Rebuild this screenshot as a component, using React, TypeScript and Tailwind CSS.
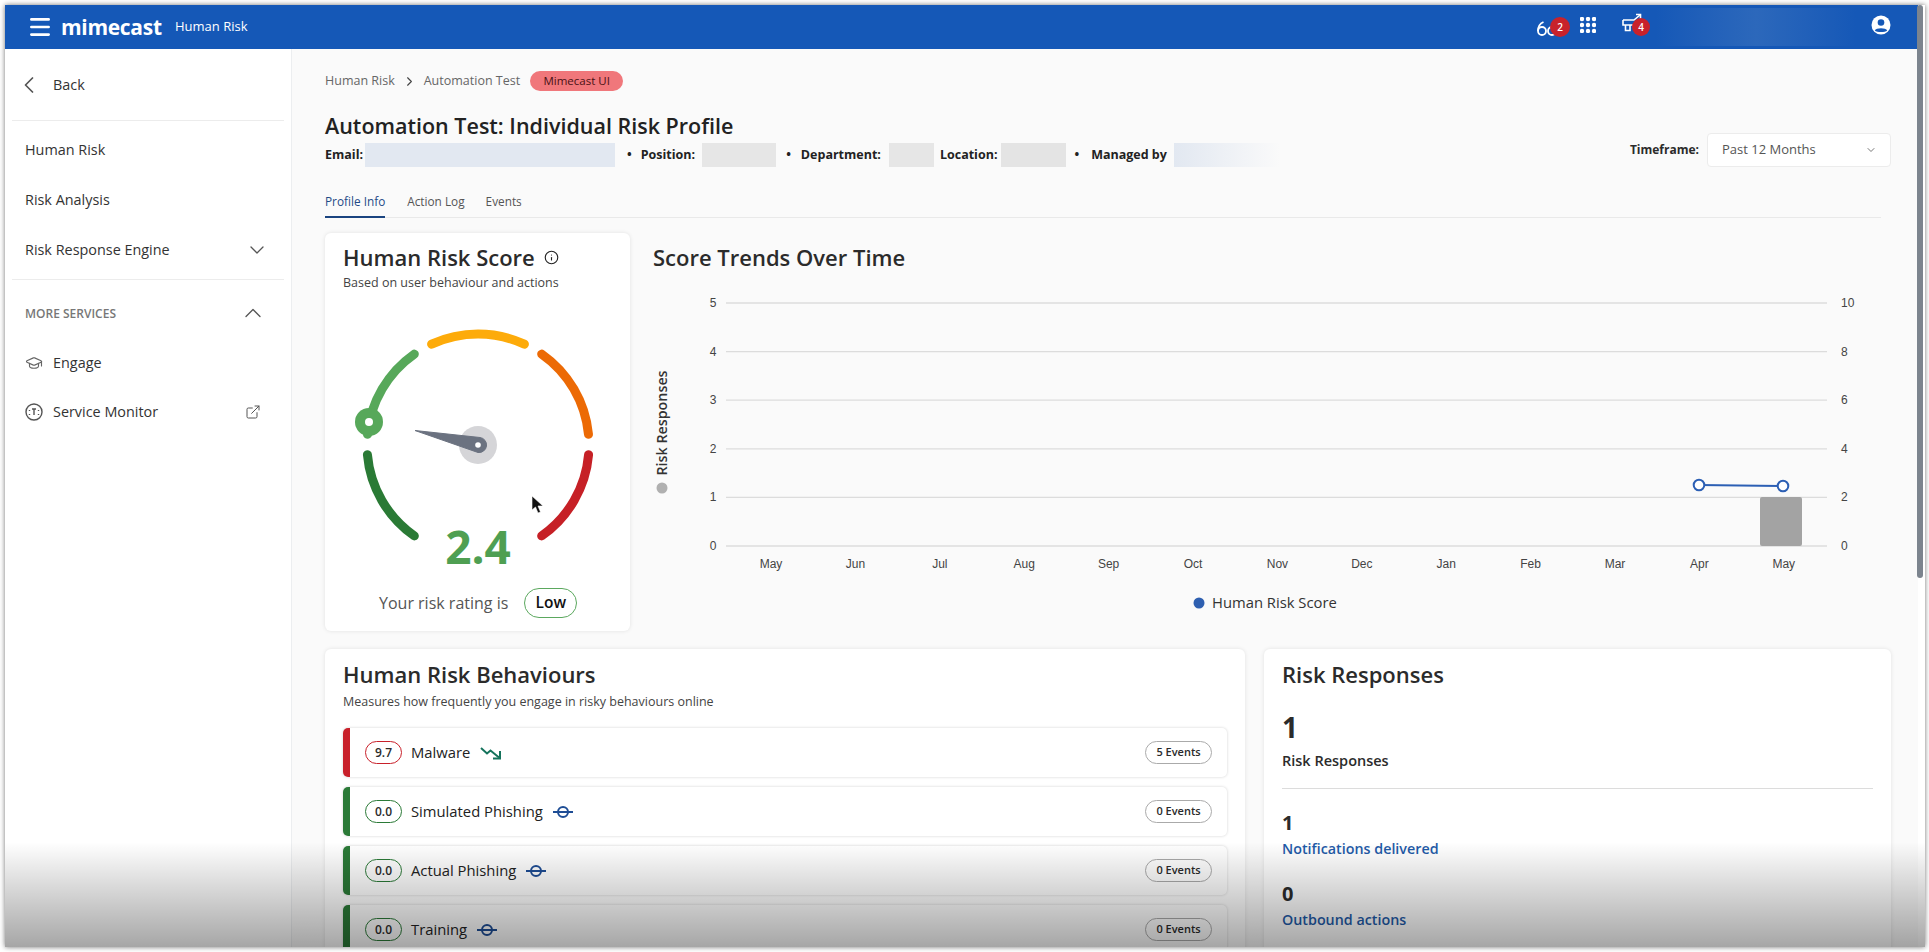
import {
  ChevronDown,
  ChevronLeft,
  ChevronRight,
  ChevronUp,
  ExternalLink,
  GraduationCap,
  Info,
  Menu,
} from "lucide-react";

const months = ["May", "Jun", "Jul", "Aug", "Sep", "Oct", "Nov", "Dec", "Jan", "Feb", "Mar", "Apr", "May"];

const behaviours = [
  { score: "9.7", name: "Malware", events: "5 Events", bad: true },
  { score: "0.0", name: "Simulated Phishing", events: "0 Events", bad: false },
  { score: "0.0", name: "Actual Phishing", events: "0 Events", bad: false },
  { score: "0.0", name: "Training", events: "0 Events", bad: false },
];

const arc = (from: number, to: number, r = 111) => {
  const p = (a: number) => {
    const rad = (a * Math.PI) / 180;
    return `${153 + r * Math.sin(rad)} ${126 - r * Math.cos(rad)}`;
  };
  return `M${p(from)} A${r} ${r} 0 0 1 ${p(to)}`;
};

const Gauge = () => (
  <svg width="305" height="262" viewBox="0 0 305 262" className="mt-[28px] block">
    <g fill="none" strokeWidth="9" strokeLinecap="round">
      <path d={arc(-145, -95)} stroke="#2a7a35" />
      <path d={arc(-84.5, -35)} stroke="#57a85a" />
      <path d={arc(-24.7, 24.7)} stroke="#fdab0a" />
      <path d={arc(35, 84.5)} stroke="#ec6a05" />
      <path d={arc(95, 145)} stroke="#c62026" />
    </g>
    <circle cx="44" cy="103" r="14" fill="#57a85a" />
    <circle cx="44" cy="103" r="4" fill="#fff" />
    <circle cx="153" cy="126" r="19" fill="#d5d5d8" />
    <path d="M90 111.500 L155 118.500 A7.500 7.500 0 0 1 153 133.500 Z" fill="#6b7280" strokeLinejoin="round" stroke="#6b7280" />
    <circle cx="153" cy="126" r="2.800" fill="#fff" />
    <text x="153" y="245" textAnchor="middle" fontSize="46" fontWeight="700" fill="#4f9f52" fontFamily="'Open Sans', sans-serif">
      2.4
    </text>
  </svg>
);

const Chart = () => {
  const x0 = 73;
  const x1 = 1174;
  return (
    <svg width="1237" height="355" viewBox="0 0 1237 355" className="block" fontFamily="'Liberation Sans', sans-serif">
      {[0, 1, 2, 3, 4, 5].map((n) => {
        const y = 270 - n * 48.600;
        return (
          <g key={n}>
            <line x1={x0} x2={x1} y1={y} y2={y} stroke="#dcdcdc" strokeWidth="1.300" />
            <text x="60" y={y + 4} textAnchor="middle" fontSize="12" fill="#444">
              {n}
            </text>
            <text x="1188" y={y + 4} fontSize="12" fill="#444">
              {n * 2}
            </text>
          </g>
        );
      })}
      {months.map((m, i) => (
        <text key={i} x={118 + i * 84.400} y="292" textAnchor="middle" fontSize="12" fill="#444">
          {m}
        </text>
      ))}
      <rect x="1107" y="221" width="42" height="49" rx="2" fill="#a3a3a3" />
      <line x1="1046" y1="209" x2="1130" y2="210" stroke="#2c5fb4" strokeWidth="2" />
      <circle cx="1046" cy="209" r="5.300" fill="#fff" stroke="#2c5fb4" strokeWidth="2" />
      <circle cx="1130" cy="210" r="5.300" fill="#fff" stroke="#2c5fb4" strokeWidth="2" />
      <text
        transform="translate(14 147) rotate(-90)"
        textAnchor="middle"
        fontSize="14.300"
        fontWeight="600"
        fill="#333"
        fontFamily="'Open Sans', sans-serif"
      >
        Risk Responses
      </text>
      <circle cx="9" cy="212" r="5.500" fill="#b0b0b0" />
      <circle cx="546" cy="327" r="5.500" fill="#2e5fb0" />
      <text x="559" y="332" fontSize="14.800" fontWeight="500" fill="#333" fontFamily="'Open Sans', sans-serif">
        Human Risk Score
      </text>
    </svg>
  );
};

const TrendDown = () => (
  <svg width="22" height="14" viewBox="0 0 22 14" fill="none" stroke="#15735c" strokeWidth="2">
    <path d="M1 2 L7 7.500 L10.500 4.500 L19 11.500" />
    <path d="M20 5 V12.500 H13" />
  </svg>
);

const Flat = () => (
  <svg width="20" height="14" viewBox="0 0 20 14" fill="none" stroke="#1e4d95" strokeWidth="2">
    <circle cx="10" cy="7" r="5" />
    <line x1="0" x2="20" y1="7" y2="7" />
  </svg>
);

const App = () => {
  return (
    <div className="h-[952px] w-[1929px] overflow-hidden bg-white pl-[5px] pt-[5px] font-['Open_Sans',sans-serif] text-[#2b2b2b]">
      <div className="relative h-[942px] w-[1920px] overflow-hidden shadow-[0_0_5px_rgba(0,0,0,0.55)]">
        {/* top bar */}
        <header className="flex h-[44px] w-[1913px] items-center bg-[#1558b7] text-white">
          <Menu className="ml-[22px] h-[26px] w-[26px]" strokeWidth={2.400} />
          <span className="ml-[8px] w-[114px] text-[21px] font-bold leading-none tracking-[-0.3px]">mimecast</span>
          <span className="text-[13px]">Human Risk</span>
          <div className="ml-auto flex items-center">
            <div className="relative mr-[10px] h-[24px] w-[33px]">
              <svg width="20" height="16" viewBox="0 0 20 16" fill="none" stroke="#fff" strokeWidth="1.800" className="absolute left-0 top-[6px]">
                <circle cx="5" cy="10" r="4" />
                <circle cx="15" cy="10" r="4" />
                <path d="M1 10 C1 6 3 2.500 6.500 1" />
                <path d="M19 9 C19 6 18 3 16 2" />
              </svg>
              <span className="absolute right-0 top-[2px] flex h-[20px] w-[20px] items-center justify-center rounded-full bg-[#c8222b] text-[10px] font-semibold">
                2
              </span>
            </div>
            <svg width="16" height="16" viewBox="0 0 16 16" fill="#fff" className="mb-[4px]">
              {[2, 8, 14].map((cy) => [2, 8, 14].map((cx) => <circle key={`${cx}-${cy}`} cx={cx} cy={cy} r="2.200" />))}
            </svg>
            <div className="relative ml-[26px] h-[24px] w-[28px]">
              <svg width="20" height="20" viewBox="0 0 20 20" fill="none" stroke="#fff" strokeWidth="1.600" className="absolute left-0 top-[-2px]">
                <path d="M1 7 H12 L18 2 M1 7 V12 H12" />
                <path d="M14 1.500 H18.500 V6" />
                <path d="M3.500 12 V17.500 H8 V12" />
              </svg>
              <span className="absolute right-0 top-[3px] flex h-[18px] w-[18px] items-center justify-center rounded-full bg-[#c8222b] text-[10px] font-semibold">
                4
              </span>
            </div>
            <div className="ml-[6px] h-[38px] w-[200px] bg-gradient-to-r from-[#1558b7] via-[#2c68bb] to-[#1558b7]" />
            <svg width="20" height="20" viewBox="0 0 20 20" className="ml-[15px] mr-[27px] mb-[4px]">
              <circle cx="10" cy="10" r="9.500" fill="#fff" />
              <circle cx="10" cy="7.500" r="3.300" fill="#1558b7" />
              <path d="M3.800 15.500 C5 12.500 15 12.500 16.200 15.500 C14 17.500 6 17.500 3.800 15.500 Z" fill="#1558b7" />
            </svg>
          </div>
        </header>

        <div className="flex h-[898px]">
          {/* sidebar */}
          <aside className="w-[287px] shrink-0 border-r border-[#eceef0] bg-white text-[14.400px] text-[#333]">
            <div className="mx-[7px] flex h-[72px] items-center border-b border-[#ececec]">
              <ChevronLeft className="ml-[3px] h-[28px] w-[28px] text-[#555]" strokeWidth={1.500} />
              <span className="ml-[10px]">Back</span>
            </div>
            <div className="flex h-[56px] items-center pl-[20px] pt-[2px]">Human Risk</div>
            <div className="-mt-[2px] flex h-[50px] items-center pl-[20px]">Risk Analysis</div>
            <div className="mx-[7px] flex h-[55px] items-center justify-between border-b border-[#ececec] pb-[4px] pl-[13px] pr-[15px]">
              <span>Risk Response Engine</span>
              <ChevronDown className="h-[24px] w-[24px] text-[#555]" strokeWidth={1.300} />
            </div>
            <div className="flex h-[68px] items-center justify-between pl-[20px] pr-[24px]">
              <span className="text-[12px] font-semibold text-[#777]">MORE SERVICES</span>
              <ChevronUp className="mb-[3px] h-[28px] w-[28px] text-[#555]" strokeWidth={1.100} />
            </div>
            <div className="flex h-[29px] items-center pl-[20px]">
              <GraduationCap className="h-[18px] w-[18px] text-[#666]" strokeWidth={1.500} />
              <span className="ml-[10px]">Engage</span>
            </div>
            <div className="mt-[20px] flex h-[29px] items-center pl-[20px] pr-[30px]">
              <svg width="18" height="18" viewBox="0 0 18 18" fill="none" stroke="#555" strokeWidth="1.400">
                <circle cx="9" cy="9" r="8" />
                <path d="M7 6 H11 M9 6 V12" />
                <path d="M4.500 7 V8 M4.500 11 V12 M13.500 7 V8 M13.500 11 V12" />
              </svg>
              <span className="ml-[10px]">Service Monitor</span>
              <ExternalLink className="ml-auto h-[16px] w-[16px] text-[#555]" strokeWidth={1.500} />
            </div>
          </aside>

          {/* main */}
          <main className="w-[1626px] bg-[#fafafa] pl-[33px] pr-[27px]">
            <div className="mt-[22px] flex h-[20px] items-center text-[12.500px] text-[#666]">
              <span>Human Risk</span>
              <ChevronRight className="ml-[7px] mr-[7px] h-[15px] w-[15px] text-[#444]" strokeWidth={1.800} />
              <span>Automation Test</span>
              <span className="ml-[10px] flex h-[20px] w-[93px] items-center justify-center rounded-full bg-[#f0777b] text-[11.500px] text-[#4a1114]">
                Mimecast UI
              </span>
            </div>

            <div className="mt-[20px] flex items-end justify-between">
              <div>
                <h1 className="h-[32px] text-[21.500px] font-semibold leading-[30px] text-[#222]">
                  Automation Test: Individual Risk Profile
                </h1>
                <div className="flex h-[24px] items-center text-[12.500px] font-bold text-[#222]">
                  <span>Email:</span>
                  <span className="ml-[2px] h-[24px] w-[250px] bg-[#e2e8f1]" />
                  <span className="ml-[12px] mr-[9px]">•</span>
                  <span>Position:</span>
                  <span className="ml-[7px] h-[24px] w-[74px] bg-[#e6e6e6]" />
                  <span className="ml-[10px] mr-[10px]">•</span>
                  <span>Department:</span>
                  <span className="ml-[8px] h-[24px] w-[45px] bg-[#e6e6e6]" />
                  <span className="ml-[6px]">Location:</span>
                  <span className="ml-[4px] h-[24px] w-[65px] bg-[#e4e4e4]" />
                  <span className="ml-[8px] mr-[12px]">•</span>
                  <span>Managed by</span>
                  <span className="ml-[7px] h-[24px] w-[106px] bg-gradient-to-r from-[#e2e8f1] to-[#fafafa]" />
                </div>
              </div>
              <div className="flex items-center">
                <span className="text-[12px] font-bold">Timeframe:</span>
                <div className="ml-[8px] flex h-[34px] w-[184px] items-center justify-between rounded-[4px] border border-[#ececec] bg-white pl-[14px] pr-[13px] text-[13px] text-[#555]">
                  Past 12 Months
                  <ChevronDown className="h-[12px] w-[12px] text-[#777]" />
                </div>
              </div>
            </div>

            <div className="mr-[10px] mt-[23px] flex h-[28px] gap-[22px] border-b border-[#e9e9e9] text-[11.800px] text-[#555]">
              <span className="h-[28px] border-b-2 border-[#1a4480] pt-[3px] text-[#1f4a87]">Profile Info</span>
              <span className="pt-[3px]">Action Log</span>
              <span className="ml-[-1px] pt-[3px]">Events</span>
            </div>

            <div className="mt-[15px] flex gap-[23px]">
              <section className="h-[398px] w-[305px] shrink-0 rounded-[6px] bg-white pt-[10px] shadow-[0_0_4px_rgba(0,0,0,0.1)]">
                <div className="flex h-[28px] items-center pl-[18px]">
                  <h2 className="text-[22px] font-semibold leading-[28px]">Human Risk Score</h2>
                  <Info className="ml-[9px] h-[15px] w-[15px] text-[#222]" strokeWidth={1.800} />
                </div>
                <p className="mt-[4px] pl-[18px] text-[12.500px] leading-[16px] text-[#444]">Based on user behaviour and actions</p>
                <Gauge />
                <div className="mt-[7px] flex h-[30px] items-center pl-[54px]">
                  <span className="text-[16px] text-[#555]">Your risk rating is</span>
                  <span className="ml-[16px] flex h-[30px] w-[53px] items-center justify-center rounded-full border border-[#5ba85e] text-[15.500px] font-semibold text-[#111]">
                    Low
                  </span>
                </div>
              </section>
              <section className="flex-1">
                <h2 className="h-[43px] pt-[10px] text-[22px] font-semibold leading-[28px]">Score Trends Over Time</h2>
                <Chart />
              </section>
            </div>

            <div className="mt-[18px] flex gap-[19px]">
              <section className="w-[920px] rounded-[6px] bg-white px-[18px] pt-[11px] shadow-[0_0_4px_rgba(0,0,0,0.1)]">
                <h2 className="text-[22px] font-semibold leading-[28px]">Human Risk Behaviours</h2>
                <p className="mt-[6px] text-[12.500px] leading-[16px] text-[#444]">Measures how frequently you engage in risky behaviours online</p>
                <div className="mt-[18px] flex flex-col gap-[10px]">
                  {behaviours.map((b) => (
                    <div key={b.name} className="flex h-[49px] overflow-hidden rounded-[5px] bg-white shadow-[0_0_3px_rgba(0,0,0,0.18)]">
                      <div className={b.bad ? "w-[7px] bg-[#c8202a]" : "w-[7px] bg-[#2b7a37]"} />
                      <div className="flex flex-1 items-center pl-[15px] pr-[15px]">
                        <span
                          className={
                            b.bad
                              ? "flex h-[23px] w-[37px] items-center justify-center rounded-full border border-[#c8202a] text-[12px] font-semibold"
                              : "flex h-[23px] w-[37px] items-center justify-center rounded-full border border-[#2b7a37] text-[12px] font-semibold"
                          }
                        >
                          {b.score}
                        </span>
                        <span className="ml-[9px] mr-[10px] text-[14.800px] font-medium text-[#222]">{b.name}</span>
                        {b.bad ? <TrendDown /> : <Flat />}
                        <span className="ml-auto flex h-[23px] w-[67px] items-center justify-center rounded-full border border-[#aaa] text-[11px] font-semibold">
                          {b.events}
                        </span>
                      </div>
                    </div>
                  ))}
                </div>
              </section>
              <section className="flex-1 rounded-[6px] bg-white px-[18px] pt-[11px] shadow-[0_0_4px_rgba(0,0,0,0.1)]">
                <h2 className="text-[22px] font-semibold leading-[28px]">Risk Responses</h2>
                <div className="mt-[21px] text-[28px] font-bold leading-[36px]">1</div>
                <div className="mt-[7px] text-[14.500px] font-semibold leading-[18px]">Risk Responses</div>
                <div className="mt-[18px] h-px bg-[#dcdcdc]" />
                <div className="mt-[20px] text-[20px] font-bold leading-[28px]">1</div>
                <div className="mt-[2px] text-[14.300px] font-semibold leading-[20px] text-[#1f5ba8]">Notifications delivered</div>
                <div className="mt-[21px] text-[20px] font-bold leading-[28px]">0</div>
                <div className="mt-[2px] text-[14.300px] font-semibold leading-[20px] text-[#1f5ba8]">Outbound actions</div>
              </section>
            </div>
          </main>
        </div>

        {/* scrollbar */}
        <div className="absolute right-[2px] top-0 h-[573px] w-[6px] rounded-full bg-[#7c848e]" />
        {/* mouse pointer */}
        <svg width="14" height="20" viewBox="0 0 14 20" className="absolute left-[526px] top-[490px]">
          <path d="M1 1 V15 L4.500 12 L7 18 L9.500 17 L7 11 H12 Z" fill="#111" stroke="#fff" strokeWidth="0.600" />
        </svg>
        {/* fade at the bottom of the recording */}
        <div className="pointer-events-none absolute inset-x-0 bottom-0 h-[105px] bg-gradient-to-b from-transparent to-[rgba(0,0,0,0.35)]" />
      </div>
    </div>
  );
};

export default App;
